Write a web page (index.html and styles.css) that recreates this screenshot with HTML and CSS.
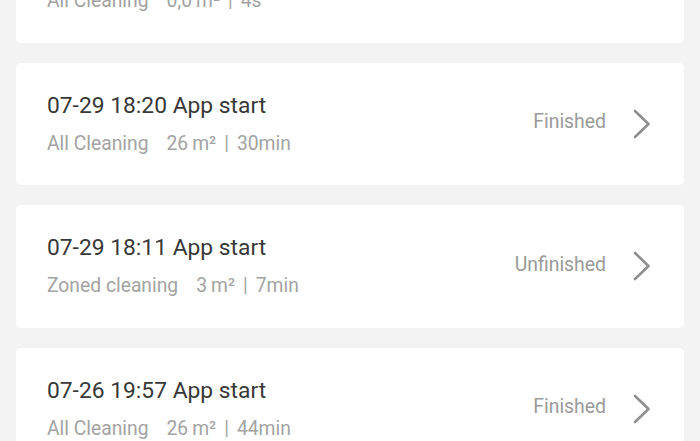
FILE: index.html
```html
<!DOCTYPE html>
<html>
<head>
<meta charset="utf-8">
<link rel="stylesheet" href="styles.css">
</head>
<body>
<div class="list">
  <div class="card">
    <div class="info">
      <div class="title">07-29 18:25 App start</div>
      <div class="sub"><span class="mode">All Cleaning</span><span class="area">0,0<span class="unit">m²</span></span><span class="sep">|</span><span class="dur">4s</span></div>
    </div>
    <div class="status">Finished</div>
    <svg class="chev" viewBox="0 0 18 30" width="18" height="30"><path d="M2 2 L15.5 15 L2 28" fill="none" stroke="#8f8f8f" stroke-width="2.6" stroke-linecap="round" stroke-linejoin="round"/></svg>
  </div>
  <div class="card">
    <div class="info">
      <div class="title">07-29 18:20 App start</div>
      <div class="sub"><span class="mode">All Cleaning</span><span class="area">26<span class="unit">m²</span></span><span class="sep">|</span><span class="dur">30min</span></div>
    </div>
    <div class="status">Finished</div>
    <svg class="chev" viewBox="0 0 18 30" width="18" height="30"><path d="M2 2 L15.5 15 L2 28" fill="none" stroke="#8f8f8f" stroke-width="2.6" stroke-linecap="round" stroke-linejoin="round"/></svg>
  </div>
  <div class="card">
    <div class="info">
      <div class="title">07-29 18:11 App start</div>
      <div class="sub"><span class="mode">Zoned cleaning</span><span class="area">3<span class="unit">m²</span></span><span class="sep">|</span><span class="dur">7min</span></div>
    </div>
    <div class="status">Unfinished</div>
    <svg class="chev" viewBox="0 0 18 30" width="18" height="30"><path d="M2 2 L15.5 15 L2 28" fill="none" stroke="#8f8f8f" stroke-width="2.6" stroke-linecap="round" stroke-linejoin="round"/></svg>
  </div>
  <div class="card">
    <div class="info">
      <div class="title">07-26 19:57 App start</div>
      <div class="sub"><span class="mode">All Cleaning</span><span class="area">26<span class="unit">m²</span></span><span class="sep">|</span><span class="dur">44min</span></div>
    </div>
    <div class="status">Finished</div>
    <svg class="chev" viewBox="0 0 18 30" width="18" height="30"><path d="M2 2 L15.5 15 L2 28" fill="none" stroke="#8f8f8f" stroke-width="2.6" stroke-linecap="round" stroke-linejoin="round"/></svg>
  </div>
</div>
</body>
</html>
```
FILE: styles.css
```css
html, body {
  margin: 0;
  padding: 0;
  background: #f3f3f3;
  overflow: hidden;
}
body {
  width: 700px;
  height: 441px;
  font-family: Roboto, "Noto Sans", sans-serif;
}
.list {
  display: flex;
  flex-direction: column;
  gap: 20px;
  margin-top: -80px;
  padding: 0 16px;
}
.card {
  height: 122.5px;
  background: #ffffff;
  border-radius: 5px;
  display: flex;
  align-items: center;
  padding: 0 33px 0 31px;
  box-sizing: border-box;
}
.info {
  flex: 1;
  display: flex;
  flex-direction: column;
  gap: 12px;
}
.title {
  font-size: 22.8px;
  line-height: 28px;
  color: #383838;
}
.sub {
  font-size: 19.3px;
  line-height: 24px;
  color: #a3a3a3;
  display: flex;
}
.mode {
  margin-right: 18px;
}
.unit {
  margin-left: 4px;
}
.sep {
  margin: 0 8px;
}
.status {
  font-size: 19.4px;
  color: #9a9a9a;
  margin-right: 27px;
  margin-top: -4px;
}
.chev {
  display: block;
}
```
